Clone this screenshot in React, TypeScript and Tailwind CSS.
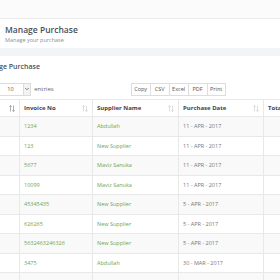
import { ChevronDown } from "lucide-react"

const rows = [
  { no: "1", invoice: "1234", supplier: "Abdullah", date: "11 - APR - 2017", total: "" },
  { no: "2", invoice: "123", supplier: "New Supplier", date: "11 - APR - 2017", total: "" },
  { no: "3", invoice: "5677", supplier: "Maviz Sanuka", date: "11 - APR - 2017", total: "" },
  { no: "4", invoice: "10099", supplier: "Maviz Sanuka", date: "11 - APR - 2017", total: "" },
  { no: "5", invoice: "45345435", supplier: "New Supplier", date: "5 - APR - 2017", total: "" },
  { no: "6", invoice: "626265", supplier: "New Supplier", date: "5 - APR - 2017", total: "" },
  { no: "7", invoice: "5632463246326", supplier: "New Supplier", date: "5 - APR - 2017", total: "" },
  { no: "8", invoice: "3475", supplier: "Abdullah", date: "30 - MAR - 2017", total: "" },
  { no: "9", invoice: "345345A", supplier: "Abdullah", date: "29 - MAR - 2017", total: "" },
]

function SortIcon({ active }: { active?: boolean }) {
  return (
    <svg width="6" height="7" viewBox="0 0 6 7" className={active ? "text-[#9a9a9a]" : "text-[#d6d6d6]"}>
      <path d="M1.5 0.5 V6.5 M0.3 1.8 L1.5 0.5 L2.7 1.8" stroke="currentColor" strokeWidth="0.8" fill="none" />
      <path d="M4.5 0.5 V6.5 M3.3 5.2 L4.5 6.5 L5.7 5.2" stroke="currentColor" strokeWidth="0.8" fill="none" />
    </svg>
  )
}

export default function App() {
  const headers = [
    { label: "#", w: "w-[40px]", active: true },
    { label: "Invoice No", w: "w-[73px]" },
    { label: "Supplier Name", w: "w-[86px]" },
    { label: "Purchase Date", w: "w-[85px]" },
    { label: "Total Amount", w: "w-[90px]" },
  ]

  return (
    <div className="h-[280px] w-[280px] overflow-hidden bg-[#f3f4f7] font-['Open_Sans',sans-serif]">
      {/* top bar */}
      <div className="h-[19px] border-b border-[#ebebeb] bg-[#fbfbfb]" />

      {/* page header */}
      <div className="flex h-[29px] flex-col justify-center bg-white pl-[5px]">
        <h1 className="text-[8.5px] font-semibold leading-[12px] text-[#4a4f59]">Manage Purchase</h1>
        <p className="text-[5.5px] leading-[8px] text-[#8a8f99]">Manage your purchase</p>
      </div>

      {/* card */}
      <div className="mt-[8px] bg-white">
        <div className="-ml-[20px] w-[400px]">
          <h2 className="pt-[6px] text-[7px] font-semibold leading-[10px] text-[#4a4f59]">Manage Purchase</h2>

          <div className="-ml-[1px] mt-[10px] flex h-[14px] items-center">
            <span className="text-[6px] text-[#666]">Show</span>
            <div className="ml-[3px] flex h-[13px] w-[34px] items-center justify-between border border-[#dcdcdc] bg-white pl-[9px]">
              <span className="text-[5.5px] text-[#555]">10</span>
              <div className="flex h-full w-[7px] items-center justify-center border-l border-[#dcdcdc] bg-[#f3f3f3]">
                <ChevronDown size={6} strokeWidth={3} className="text-[#555]" />
              </div>
            </div>
            <span className="ml-[3px] text-[6px] text-[#666]">entries</span>

            <div className="ml-[77px] flex">
              {["Copy", "CSV", "Excel", "PDF", "Print"].map((b, i) => (
                <div
                  key={b}
                  className={`flex h-[13px] items-center justify-center border border-[#dddddd] bg-white text-[5.5px] text-[#555] ${i > 0 ? "-ml-px" : ""} ${b === "Print" ? "w-[19px]" : "w-[20px]"}`}
                >
                  {b}
                </div>
              ))}
            </div>
          </div>

          <table className="-ml-[1px] mt-[3px] table-fixed border-collapse text-left">
            <thead>
              <tr className="h-[17px]">
                {headers.map((h) => (
                  <th key={h.label} className={`${h.w} border-x border-t border-[#e8e8e8] px-[4px] align-middle`}>
                    <div className="flex items-center justify-between">
                      <span className="text-[6px] font-bold text-[#3d4350]">{h.label}</span>
                      <SortIcon active={h.active} />
                    </div>
                  </th>
                ))}
              </tr>
            </thead>
            <tbody>
              {rows.map((r, i) => (
                <tr key={r.no} className={`h-[19.5px] ${i % 2 === 0 ? "bg-[#f9f9f9]" : "bg-white"}`}>
                  <td className="border border-[#e8e8e8] px-[4px] text-[5.5px] text-[#777]">{r.no}</td>
                  <td className="border border-[#e8e8e8] px-[4px] text-[5.5px] text-[#6fa652]">{r.invoice}</td>
                  <td className="border border-[#e8e8e8] px-[4px] text-[5.5px] text-[#6fa652]">{r.supplier}</td>
                  <td className="border border-[#e8e8e8] px-[4px] text-[5.5px] text-[#777]">{r.date}</td>
                  <td className="border border-[#e8e8e8] px-[4px] text-[5.5px] text-[#777]">{r.total}</td>
                </tr>
              ))}
            </tbody>
          </table>
        </div>
      </div>
    </div>
  )
}
